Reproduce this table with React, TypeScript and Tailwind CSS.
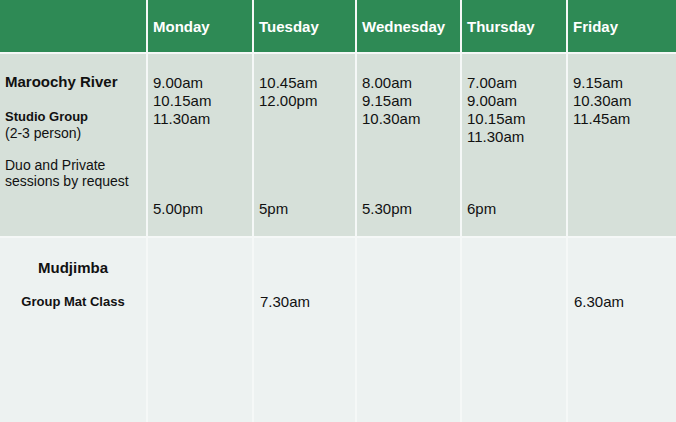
import React from "react";

const days = ["Monday", "Tuesday", "Wednesday", "Thursday", "Friday"];
const morning: string[][] = [
  ["9.00am", "10.15am", "11.30am"],
  ["10.45am", "12.00pm"],
  ["8.00am", "9.15am", "10.30am"],
  ["7.00am", "9.00am", "10.15am", "11.30am"],
  ["9.15am", "10.30am", "11.45am"],
];
const evening = ["5.00pm", "5pm", "5.30pm", "6pm", ""];
const mud = ["", "7.30am", "", "", "6.30am"];

export default function App() {
  return (
    <div
      className="w-[676px] h-[422px] overflow-hidden bg-[#f5f8f7] text-[#111]"
      style={{ fontFamily: '"Liberation Sans", Arial, sans-serif' }}
    >
      <div className="grid h-full grid-cols-[146px_104px_101px_103px_104px_1fr] grid-rows-[52px_182px_1fr] gap-[2px]">
        {/* header */}
        <div className="bg-[#2e8a55]" />
        {days.map((d) => (
          <div key={d} className="bg-[#2e8a55] flex items-center pl-[5px] pt-[2px] text-white font-bold text-[15px]">
            {d}
          </div>
        ))}

        {/* Maroochy River row */}
        <div className="bg-[#d6e0d9] pl-[5px] pt-[19px]">
          <div className="font-bold text-[15px] leading-[18px]">Maroochy River</div>
          <div className="mt-[18px] font-bold text-[13px] leading-[16px]">Studio Group</div>
          <div className="text-[14px] leading-[16px]">(2-3 person)</div>
          <div className="mt-[16px] text-[14px] leading-[16px]">Duo and Private</div>
          <div className="text-[14px] leading-[16px]">sessions by request</div>
        </div>
        {morning.map((times, i) => (
          <div key={i} className="bg-[#d6e0d9] flex flex-col pl-[5px] pt-[20px] pb-[18px] text-[15px] leading-[18px]">
            {times.map((t) => (
              <div key={t}>{t}</div>
            ))}
            <div className="mt-auto">{evening[i]}</div>
          </div>
        ))}

        {/* Mudjimba row */}
        <div className="bg-[#edf2f1] flex flex-col items-center pt-[21px]">
          <div className="font-bold text-[15px] leading-[18px]">Mudjimba</div>
          <div className="mt-[17px] font-bold text-[13px] leading-[16px]">Group Mat Class</div>
        </div>
        {mud.map((t, i) => (
          <div key={i} className="bg-[#edf2f1] pl-[6px] pt-[55px] text-[15px] leading-[18px]">
            {t}
          </div>
        ))}
      </div>
    </div>
  );
}
